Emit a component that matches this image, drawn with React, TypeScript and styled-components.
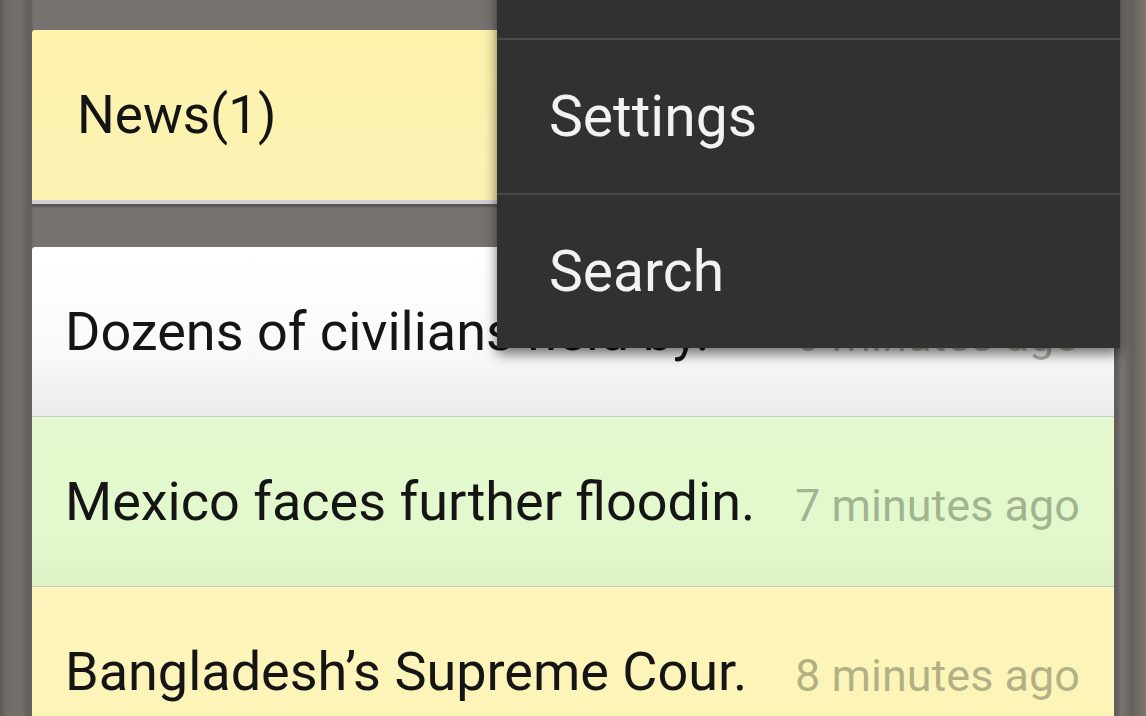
import React, { FC, ReactElement } from 'react';
import styled, { createGlobalStyle } from 'styled-components';

const GlobalStyle = createGlobalStyle`
  html, body {
    margin: 0;
    padding: 0;
    background: #74706b;
  }
  * {
    box-sizing: border-box;
  }
`;

const Screen = styled.div`
  position: relative;
  width: 1146px;
  height: 716px;
  overflow: hidden;
  font-family: Roboto, "Noto Sans", sans-serif;
  background: linear-gradient(90deg, #5d5956 0px, #6f6b67 6px, #736f6a 20px, #615d5a 30px, #77726d 34px, #77726d 1110px, #5f5b58 1116px, #7a7571 1122px, #65615d 1132px, #7a7570 1146px);
  padding: 30px 32px 0 32px;
  display: flex;
  flex-direction: column;
  gap: 47px;
`;

const HeaderCard = styled.div`
  height: 170px;
  flex-shrink: 0;
  display: flex;
  align-items: center;
  padding-left: 45px;
  border-radius: 3px 3px 0 0;
  background: linear-gradient(180deg, #fdf3ad 0%, #fcf2b3 100%);
  box-shadow: 0 4px 0 #d3ced3, 0 7px 2px rgba(60, 55, 60, 0.45);
  font-size: 53px;
  color: #141414;
`;

const ListCard = styled.div`
  flex: 1;
  display: flex;
  flex-direction: column;
  border-radius: 3px 3px 0 0;
  overflow: hidden;
`;

const rowBg: Record<string, string> = {
  white: 'linear-gradient(180deg, #ffffff 0%, #fafafa 60%, #ebebeb 100%)',
  green: 'linear-gradient(180deg, #e4f9cf 0%, #e2f8cc 80%, #dcf2c6 100%)',
  yellow: 'linear-gradient(180deg, #fdf5bb 0%, #fcf3b6 100%)',
};

const Row = styled.div<{ $tone: string }>`
  height: 170px;
  flex-shrink: 0;
  display: flex;
  align-items: center;
  justify-content: space-between;
  padding: 0 34px 0 33px;
  background: ${p => rowBg[p.$tone]};
  border-bottom: 1px solid #c9cdc3;
`;

const Title = styled.span`
  font-size: 54px;
  color: #151515;
  white-space: nowrap;
`;

const Time = styled.span`
  margin-top: 8px;
  font-size: 45px;
  color: rgba(70, 80, 55, 0.42);
  white-space: nowrap;
`;

const Menu = styled.div`
  position: absolute;
  top: -117px;
  left: 497px;
  width: 623px;
  background: #313131;
  box-shadow: 0 6px 12px rgba(0, 0, 0, 0.55);
  display: flex;
  flex-direction: column;
`;

const MenuItem = styled.div`
  height: 155px;
  display: flex;
  align-items: center;
  padding-left: 52px;
  font-size: 57px;
  color: #f2f2f2;
  & + & {
    border-top: 2px solid #4a4a4a;
  }
`;

const news = [
  { title: 'Dozens of civilians held by.', time: '6 minutes ago', tone: 'white' },
  { title: 'Mexico faces further floodin.', time: '7 minutes ago', tone: 'green' },
  { title: 'Bangladesh\u2019s Supreme Cour.', time: '8 minutes ago', tone: 'yellow' },
];

const menuItems = ['', 'Settings', 'Search'];

const App: FC = (): ReactElement => {
  return (
    <Screen>
      <GlobalStyle />
      <HeaderCard>News(1)</HeaderCard>
      <ListCard>
        {news.map(item => (
          <Row key={item.title} $tone={item.tone}>
            <Title>{item.title}</Title>
            <Time>{item.time}</Time>
          </Row>
        ))}
      </ListCard>
      <Menu>
        {menuItems.map((label, i) => (
          <MenuItem key={i}>{label}</MenuItem>
        ))}
      </Menu>
    </Screen>
  );
};

export default App;
